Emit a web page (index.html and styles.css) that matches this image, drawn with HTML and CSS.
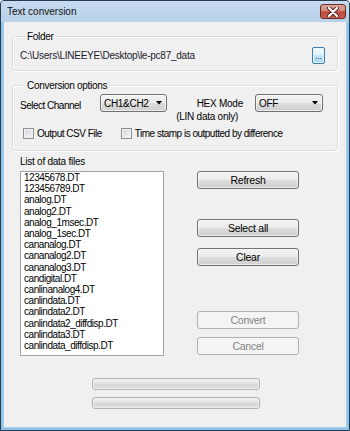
FILE: index.html
```html
<!DOCTYPE html>
<html lang="en">
<head>
    <meta charset="UTF-8">
    <title>Text conversion</title>
    <link rel="stylesheet" href="styles.css">
</head>
<body>
    <div class="window">
        <div class="titlebar">
            <span class="title">Text conversion</span>
            <span class="close">
                <svg width="12" height="10" viewBox="0 0 12 10">
                    <path d="M2 1 L10 9 M10 1 L2 9" stroke="#4a1d18" stroke-width="4" stroke-linecap="round"/>
                    <path d="M2 1 L10 9 M10 1 L2 9" stroke="#fff" stroke-width="2.2" stroke-linecap="round"/>
                </svg>
            </span>
        </div>
        <div class="client">
            <fieldset class="group folder">
                <legend>Folder</legend>
                <div class="folder-row">
                    <span class="path">C:\Users\LINEEYE\Desktop\le-pc87_data</span>
                    <button class="browse">...</button>
                </div>
            </fieldset>

            <fieldset class="group options">
                <legend>Conversion options</legend>
                <div class="option-row">
                    <span class="channel-label">Select Channel</span>
                    <div class="combo channel">
                        <span>CH1&amp;CH2</span>
                        <svg width="6" height="4" viewBox="0 0 6 4"><polygon points="0,0 6,0 3,3.5" fill="#000"/></svg>
                    </div>
                    <div class="hex-label">
                        <span class="hex-title">HEX Mode</span>
                        <span class="hex-note">(LIN data only)</span>
                    </div>
                    <div class="combo hex">
                        <span>OFF</span>
                        <svg width="6" height="4" viewBox="0 0 6 4"><polygon points="0,0 6,0 3,3.5" fill="#000"/></svg>
                    </div>
                </div>
                <div class="check-row">
                    <label class="check csv"><span class="box"></span>Output CSV File</label>
                    <label class="check stamp"><span class="box"></span>Time stamp is outputted by difference</label>
                </div>
            </fieldset>

            <div class="files">
                <div class="files-label">List of data files</div>
                <ul class="file-list">
                    <li>12345678.DT</li>
                    <li>123456789.DT</li>
                    <li>analog.DT</li>
                    <li>analog2.DT</li>
                    <li>analog_1msec.DT</li>
                    <li>analog_1sec.DT</li>
                    <li>cananalog.DT</li>
                    <li>cananalog2.DT</li>
                    <li>cananalog3.DT</li>
                    <li>candigital.DT</li>
                    <li>canlinanalog4.DT</li>
                    <li>canlindata.DT</li>
                    <li>canlindata2.DT</li>
                    <li>canlindata2_diffdisp.DT</li>
                    <li>canlindata3.DT</li>
                    <li>canlindata_diffdisp.DT</li>
                </ul>
                <div class="actions">
                    <button class="btn refresh">Refresh</button>
                    <button class="btn select-all">Select all</button>
                    <button class="btn clear">Clear</button>
                    <button class="btn convert" disabled>Convert</button>
                    <button class="btn cancel" disabled>Cancel</button>
                </div>
            </div>

            <div class="progress">
                <div class="bar"></div>
                <div class="bar"></div>
            </div>
        </div>
    </div>
</body>
</html>
```

FILE: styles.css
```css
html, body {
    margin: 0;
    padding: 0;
}

body {
    background: #fff;
    font-family: "Liberation Sans", Arial, sans-serif;
    font-size: 10px;
    letter-spacing: -0.5px;
    color: #000;
}

.window {
    width: 350px;
    height: 431px;
    box-sizing: border-box;
    border: 1px solid #2a3b4d;
    border-radius: 4px 4px 0 0;
    background: #8cc4ea;
    display: flex;
    flex-direction: column;
}

.titlebar {
    height: 21px;
    flex: none;
    display: flex;
    align-items: center;
    justify-content: space-between;
    padding: 0 3px 0 6px;
    background: linear-gradient(#c6dbf1, #b9d1ea);
    border-radius: 3px 3px 0 0;
}

.title {
    color: #111;
    letter-spacing: 0;
}

.close {
    width: 26px;
    height: 15px;
    box-sizing: border-box;
    border: 1px solid #6b2a24;
    border-radius: 3px;
    background: linear-gradient(#dca59b 0%, #d08a7c 45%, #c0493a 52%, #c65f4c 100%);
    display: flex;
    align-items: center;
    justify-content: center;
}

.client {
    flex: 1;
    margin: 0 2px 2px;
    border: 1px solid #a9cdec;
    border-top: none;
    background: #f0f0f0;
}

/* group boxes */
.group {
    margin: 8px 8px 0;
    border: 1px solid #d5dfe5;
    border-radius: 3px;
    box-shadow: inset 1px 1px 0 #fff, 1px 1px 0 #fff;
    min-width: 0;
}

.group legend {
    margin-left: 5px;
    padding: 0 2px;
    line-height: 13px;
    letter-spacing: -0.3px;
}

.folder {
    padding: 4px 12px 6px 7px;
}

.folder-row {
    height: 17px;
    display: flex;
    align-items: center;
    justify-content: space-between;
}

.path {
    color: #1b1b2b;
    letter-spacing: -0.25px;
}

.browse {
    width: 13px;
    height: 17px;
    padding: 0;
    border: 1px solid #3c7fb1;
    border-radius: 2px;
    background: linear-gradient(#f2f9fd 0%, #e0f1fc 45%, #c3e5fb 50%, #a9d9f7 100%);
    box-shadow: inset 0 0 0 1px #e8f6fd;
    font-family: inherit;
    font-size: 8px;
    line-height: 8px;
    display: flex;
    align-items: flex-end;
    justify-content: center;
    padding-bottom: 2px;
    box-sizing: border-box;
}

.options {
    margin-top: 8px;
    padding: 2px 12px 10px 7px;
}

.option-row {
    display: flex;
    align-items: flex-start;
}

.channel-label {
    width: 80px;
    margin-top: 2px;
    line-height: 19px;
}

.combo {
    height: 18px;
    box-sizing: border-box;
    border: 1px solid #707070;
    border-radius: 3px;
    background: linear-gradient(#f2f2f2 0%, #ebebeb 50%, #dddddd 50%, #cfcfcf 100%);
    box-shadow: inset 0 0 0 1px rgba(255, 255, 255, 0.6);
    display: flex;
    align-items: center;
    justify-content: space-between;
    padding: 0 4px 0 3px;
    letter-spacing: -0.3px;
}

.combo.channel {
    width: 67px;
}

.combo.hex {
    width: 68px;
    margin-left: 12px;
}

.hex-label {
    width: 64px;
    margin-left: 12px;
    margin-top: 3px;
    display: flex;
    flex-direction: column;
    align-items: flex-end;
    line-height: 13px;
    white-space: nowrap;
    letter-spacing: -0.25px;
}

.hex-note {
    margin-right: 5px;
}

.check-row {
    margin-top: 4px;
    height: 13px;
    display: flex;
    align-items: center;
}

.check {
    display: flex;
    align-items: center;
    gap: 3px;
    white-space: nowrap;
}

.check.csv {
    margin-left: 3px;
}

.check.stamp {
    margin-left: 19px;
}

.box {
    width: 11px;
    height: 11px;
    box-sizing: border-box;
    border: 1px solid #8e8f8f;
    background: linear-gradient(135deg, #d0d3d7, #f7f7f7);
    box-shadow: inset 0 0 0 1px #f4f4f4;
}

/* file list */
.files {
    margin-top: 4px;
    padding-left: 16px;
    display: grid;
    grid-template-columns: 144px 102px;
    column-gap: 33px;
    row-gap: 3px;
}

.files-label {
    grid-column: 1 / 3;
    line-height: 13px;
    letter-spacing: -0.25px;
}

.file-list {
    list-style: none;
    margin: 0;
    padding: 0 0 0 3px;
    height: 185px;
    box-sizing: border-box;
    border: 1px solid #a0a4aa;
    background: #fff;
    line-height: 11.2px;
    letter-spacing: -0.45px;
}

.actions {
    display: flex;
    flex-direction: column;
}

.btn {
    height: 18px;
    padding: 0;
    border: 1px solid #707070;
    border-radius: 3px;
    background: linear-gradient(#f2f2f2 0%, #ebebeb 50%, #dddddd 50%, #cfcfcf 100%);
    box-shadow: inset 0 0 0 1px rgba(255, 255, 255, 0.6);
    font-family: inherit;
    font-size: 10.5px;
    letter-spacing: -0.25px;
    color: #000;
}

.btn:disabled {
    border-color: #adb2b5;
    background: #f4f4f4;
    box-shadow: none;
    color: #838383;
}

.select-all {
    margin-top: 30px;
}

.clear {
    margin-top: 11px;
}

.convert {
    margin-top: 45px;
}

.cancel {
    margin-top: 8px;
}

/* progress bars */
.progress {
    margin-top: 22px;
    padding-left: 88px;
    display: flex;
    flex-direction: column;
    gap: 7px;
}

.bar {
    width: 168px;
    height: 12px;
    box-sizing: border-box;
    border: 1px solid #b2b2b2;
    border-radius: 3px;
    background: linear-gradient(#f3f3f3 0%, #e4e4e4 40%, #d6d6d6 60%, #e2e2e2 100%);
    box-shadow: inset 0 0 0 1px #eeeeee;
}
```
